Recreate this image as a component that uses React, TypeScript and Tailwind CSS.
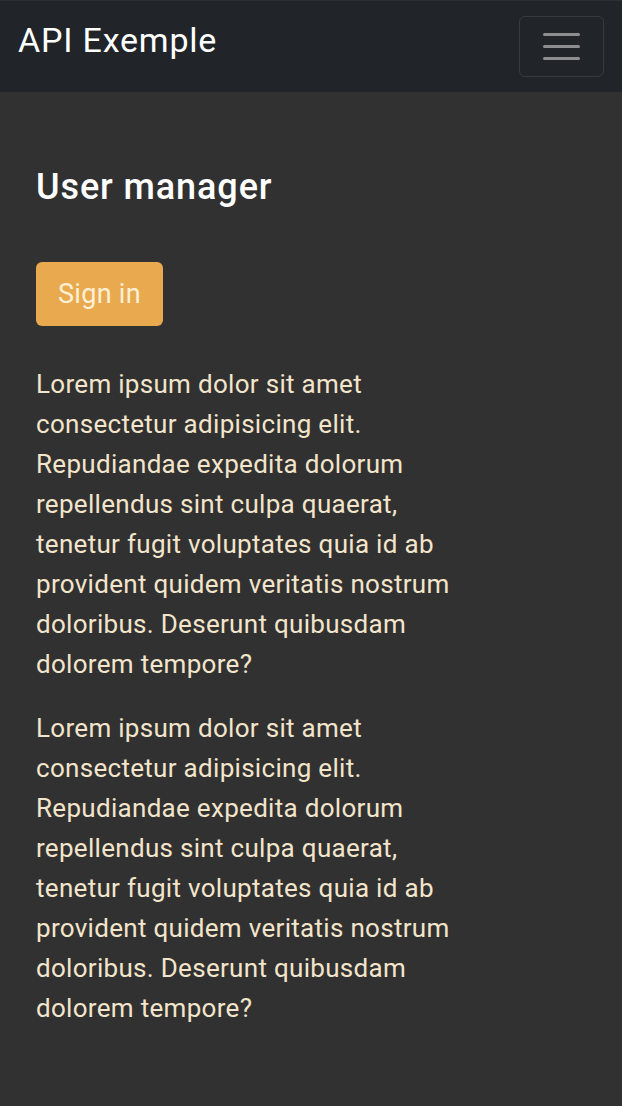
export default function App() {
  const lorem =
    "Lorem ipsum dolor sit amet consectetur adipisicing elit. Repudiandae expedita dolorum repellendus sint culpa quaerat, tenetur fugit voluptates quia id ab provident quidem veritatis nostrum doloribus. Deserunt quibusdam dolorem tempore?";

  return (
    <div className="min-h-[1106px] bg-[#313131] font-['Roboto',sans-serif]">
      {/* navbar */}
      <nav className="flex h-[92px] items-start justify-between border-t border-[#2c2f33] bg-[#212529] pl-[18px] pr-[18px]">
        <span className="mt-[17px] text-[34px] leading-[44px] tracking-[0.8px] text-white">API Exemple</span>
        <button className="mt-[15px] flex h-[61px] w-[85px] flex-col items-center justify-center gap-[9px] rounded-[6px] border border-[#373b3f]">
          <span className="block h-[3px] w-[37px] rounded-full bg-[#8c8d8f]" />
          <span className="block h-[3px] w-[37px] rounded-full bg-[#8c8d8f]" />
          <span className="block h-[3px] w-[37px] rounded-full bg-[#8c8d8f]" />
        </button>
      </nav>

      <main className="px-[36px] pt-[75px]">
        <h1 className="text-[36px] font-medium leading-[40px] tracking-[0.9px] text-white">User manager</h1>

        <button className="mt-[55px] h-[64px] rounded-[6px] bg-[#e9a94f] px-[22px] text-[27px] tracking-[0.3px] text-[#fdf0d5]">
          Sign in
        </button>

        <div className="mt-[38px] max-w-[420px] text-[26px] leading-[40px] tracking-[0.3px] text-[#f3e5cb]">
          <p>{lorem}</p>
          <p className="mt-[24px]">{lorem}</p>
        </div>
      </main>
    </div>
  );
}
